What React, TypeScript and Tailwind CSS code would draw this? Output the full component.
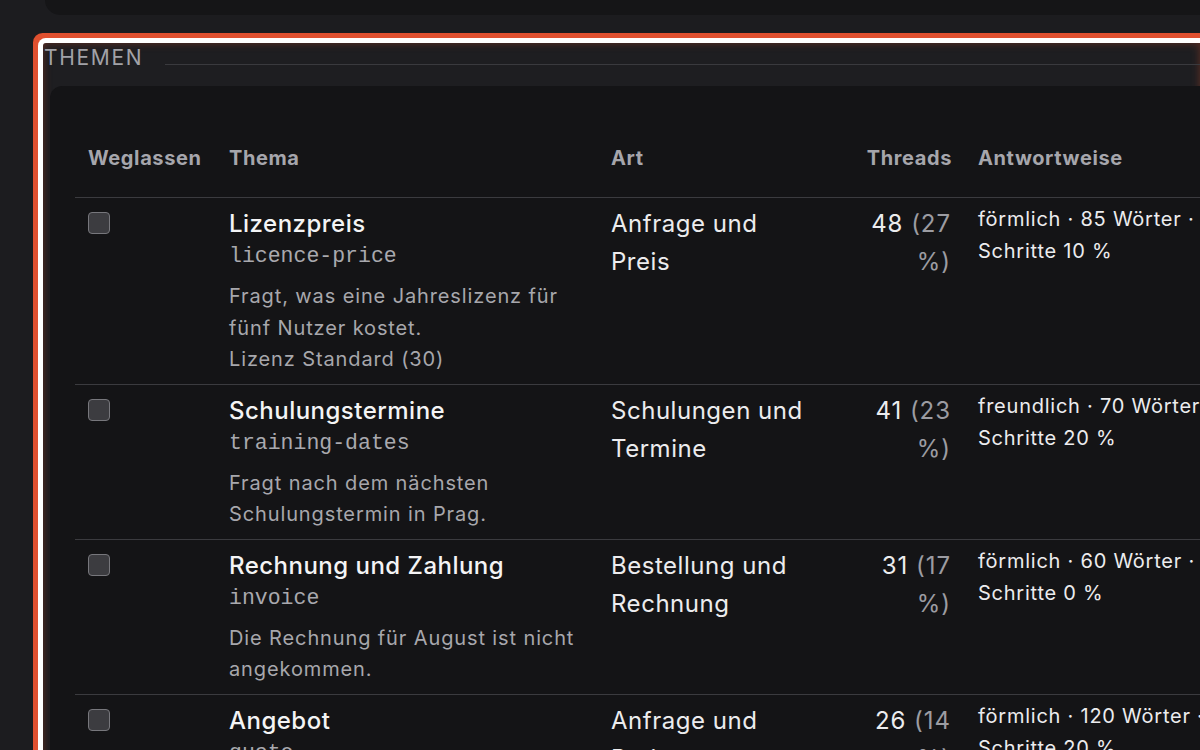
import React from 'react';

type Topic = {
  name: string;
  slug: string;
  description: string[];
  kind: string;
  threads: number;
  share: number;
  tone: string;
};

const topics: Topic[] = [
  {
    name: 'Lizenzpreis',
    slug: 'licence-price',
    description: ['Fragt, was eine Jahreslizenz für fünf Nutzer kostet.', 'Lizenz Standard (30)'],
    kind: 'Anfrage und Preis',
    threads: 48,
    share: 27,
    tone: 'förmlich · 85 Wörter · Schritte 10 %',
  },
  {
    name: 'Schulungstermine',
    slug: 'training-dates',
    description: ['Fragt nach dem nächsten Schulungstermin in Prag.'],
    kind: 'Schulungen und Termine',
    threads: 41,
    share: 23,
    tone: 'freundlich · 70 Wörter · Schritte 20 %',
  },
  {
    name: 'Rechnung und Zahlung',
    slug: 'invoice',
    description: ['Die Rechnung für August ist nicht angekommen.'],
    kind: 'Bestellung und Rechnung',
    threads: 31,
    share: 17,
    tone: 'förmlich · 60 Wörter · Schritte 0 %',
  },
  {
    name: 'Angebot',
    slug: 'quote',
    description: ['Bittet um ein Angebot für zehn Lizenzen.'],
    kind: 'Anfrage und Preis',
    threads: 26,
    share: 14,
    tone: 'förmlich · 120 Wörter · Schritte 20 %',
  },
];

const cols = 'grid grid-cols-[141px_382px_251px_116px_300px]';

const TopicRow: React.FC<{ topic: Topic }> = ({ topic }) => (
  <div className={`${cols} border-b border-[#3b3b3f]`}>
    <div className="pb-[8px] pl-[13px] pt-[9px]">
      <div className="mt-[5px] h-[22px] w-[22px] rounded-[4px] border-[1.5px] border-[#77777c] bg-[#3c3c40]" />
    </div>
    <div className="pb-[8px] pl-[13px] pr-[13px] pt-[9px]">
      <div className="text-[24px] font-medium leading-[34px] tracking-[0.02em] text-[#f4f4f5]">
        {topic.name}
      </div>
      <div className="font-['Liberation_Mono',monospace] text-[21.5px] leading-[31px] text-[#a9a9ae]">
        {topic.slug}
      </div>
      <div className="mt-[9px] text-[20px] leading-[31.5px] tracking-[0.044em] text-[#a7a7ac]">
        {topic.description.map((line) => (
          <div key={line}>{line}</div>
        ))}
      </div>
    </div>
    <div className="pl-[13px] pr-[38px] pt-[7px] text-[24px] leading-[38px] tracking-[0.022em] text-[#ececee]">
      {topic.kind}
    </div>
    <div className="pr-[14px] pt-[7px]">
      <div className="ml-auto w-[92px] text-right text-[24px] leading-[38px] tracking-[0.04em] text-[#ececee]">
        {topic.threads} <span className="text-[#9c9ca2]">({topic.share} %)</span>
      </div>
    </div>
    <div className="pl-[13px] pt-[5px]">
      <div className="w-[240px] text-[20px] leading-[32px] tracking-[0.038em] text-[#ececee]">
        {topic.tone}
      </div>
    </div>
  </div>
);

export default function App() {
  return (
    <div className="h-[750px] w-[1200px] overflow-hidden bg-[#1c1c1f] font-['Inter',sans-serif]">
      <div className="ml-[45px] h-[15px] rounded-bl-[16px] bg-[#151517]" />

      <section className="ml-[43px] mt-[28px] h-[760px] rounded-tl-[3px] bg-[#1e1e21] shadow-[0_0_0_5px_#ffffff,0_0_0_10px_#e0502f,inset_0_0_9px_rgba(224,80,47,0.35)]">
        <div className="flex h-[43px]">
          <h2 className="pl-[1px] pt-[3px] text-[21px] leading-[24px] tracking-[0.08em] text-[#a2a2a8]">
            THEMEN
          </h2>
          <div className="ml-[22px] mt-[21px] h-[1px] flex-1 bg-[#3a3a3e]" />
        </div>

        <div className="ml-[7px] h-[700px] rounded-tl-[12px] bg-[#141416] pl-[25px] pt-[33px]">
          <div
            className={`${cols} border-b border-[#3b3b3f] text-[20px] font-bold leading-[30px] tracking-[0.03em] text-[#a6a6ac]`}
          >
            <div className="py-[24px] pl-[13px]">Weglassen</div>
            <div className="py-[24px] pl-[13px]">Thema</div>
            <div className="py-[24px] pl-[13px]">Art</div>
            <div className="py-[24px] pr-[13px] text-right">Threads</div>
            <div className="py-[24px] pl-[13px]">Antwortweise</div>
          </div>
          {topics.map((topic) => (
            <TopicRow key={topic.slug} topic={topic} />
          ))}
        </div>
      </section>
    </div>
  );
}
